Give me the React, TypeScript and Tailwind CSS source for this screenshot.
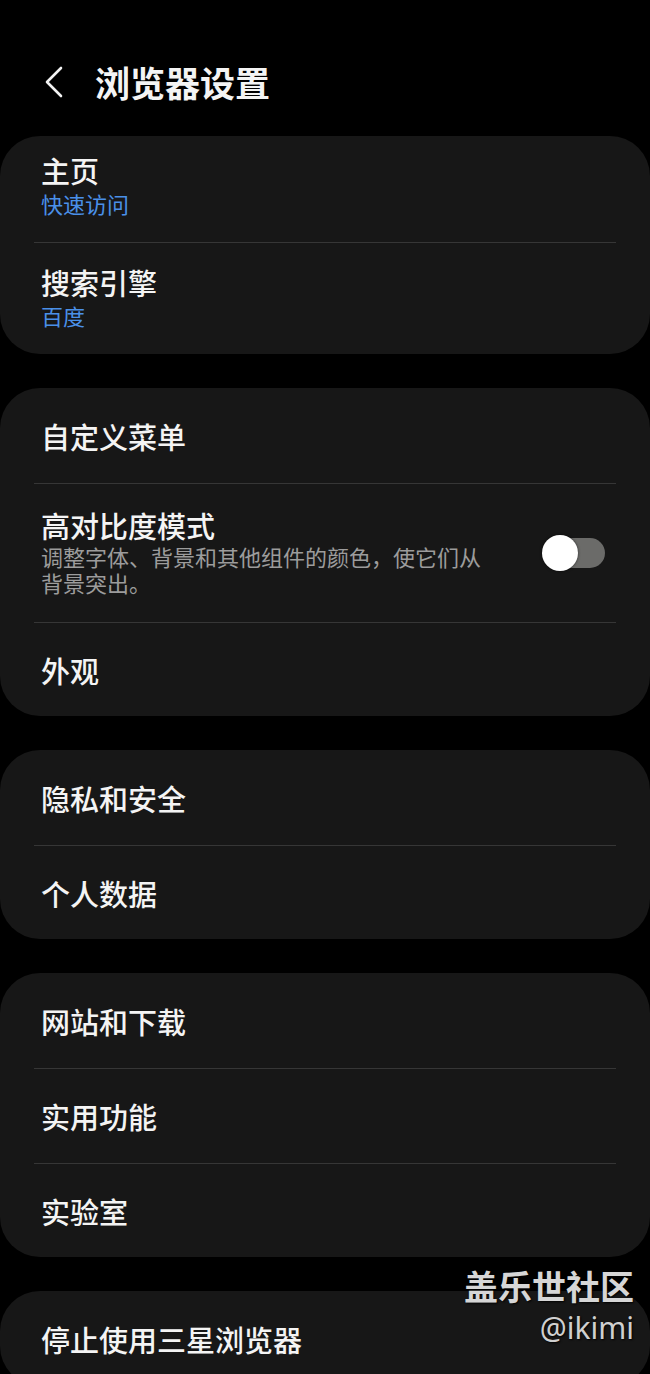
import React from "react";

const font = { fontFamily: '"Noto Sans CJK SC", "Noto Sans", sans-serif' };

function Divider() {
  return <div className="mx-[34px] h-px bg-[#363636]" />;
}

function Row({ title, sub, h }: { title: string; sub?: string; h: string }) {
  return (
    <div className={`flex flex-col justify-center px-[41px] ${h}`}>
      <div className="text-[29px] leading-[36px] text-[#f4f4f4] font-medium">{title}</div>
      {sub && <div className="text-[22px] leading-[30px] text-[#4a90e8]">{sub}</div>}
    </div>
  );
}

function Card({ children }: { children: React.ReactNode }) {
  return <div className="rounded-[40px] bg-[#171717] overflow-hidden">{children}</div>;
}

export default function App() {
  return (
    <div className="relative w-[650px] h-[1374px] overflow-hidden bg-black" style={font}>
      <div className="pt-[60px] h-[104px]">
        <div className="flex items-center h-[44px]">
          <svg className="ml-[44px]" width="20" height="32" viewBox="0 0 20 32" fill="none">
            <path d="M17 2 L3 16 L17 30" stroke="#f2f2f2" strokeWidth="2.6" strokeLinecap="round" strokeLinejoin="round" />
          </svg>
          <div className="ml-[31px] text-[35px] leading-[44px] font-bold text-[#f4f4f4]">浏览器设置</div>
        </div>
      </div>

      <div className="mt-[32px] flex flex-col gap-[34px]">
        <Card>
          <Row title="主页" sub="快速访问" h="h-[106px] pb-[8px]" />
          <Divider />
          <Row title="搜索引擎" sub="百度" h="h-[111px] pb-[3px]" />
        </Card>

        <Card>
          <Row title="自定义菜单" h="h-[95px]" />
          <Divider />
          <div className="flex items-center justify-between h-[138px] pl-[41px] pr-[45px]">
            <div className="flex flex-col pb-[4px]">
              <div className="text-[29px] leading-[36px] text-[#f4f4f4] font-medium">高对比度模式</div>
              <div className="w-[446px] text-[22px] leading-[26px] text-[#9c9c9c]">
                调整字体、背景和其他组件的颜色，使它们从背景突出。
              </div>
            </div>
            <div className="relative w-[63px] h-[36px] shrink-0">
              <div className="absolute right-0 top-[3px] h-[30px] w-[56px] rounded-full bg-[#6b6b69]" />
              <div className="absolute left-0 top-0 h-[36px] w-[36px] rounded-full bg-white shadow-[0_0_3px_rgba(0,0,0,0.6)]" />
            </div>
          </div>
          <Divider />
          <Row title="外观" h="h-[93px]" />
        </Card>

        <Card>
          <Row title="隐私和安全" h="h-[95px]" />
          <Divider />
          <Row title="个人数据" h="h-[93px]" />
        </Card>

        <Card>
          <Row title="网站和下载" h="h-[95px]" />
          <Divider />
          <Row title="实用功能" h="h-[94px]" />
          <Divider />
          <Row title="实验室" h="h-[93px]" />
        </Card>

        <Card>
          <Row title="停止使用三星浏览器" h="h-[95px]" />
        </Card>
      </div>

      <div className="absolute right-[16px] top-[1264px] flex flex-col items-end">
        <div className="text-[34px] leading-[44px] font-bold text-[#d6d6d6] [text-shadow:1px_1px_2px_rgba(0,0,0,0.9)]">
          盖乐世社区
        </div>
        <div
          className="text-[30px] leading-[40px] text-[#d0d0d0] [text-shadow:1px_1px_2px_rgba(0,0,0,0.9)]"
          style={{ fontFamily: '"Noto Sans", sans-serif' }}
        >
          @ikimi
        </div>
      </div>
    </div>
  );
}
